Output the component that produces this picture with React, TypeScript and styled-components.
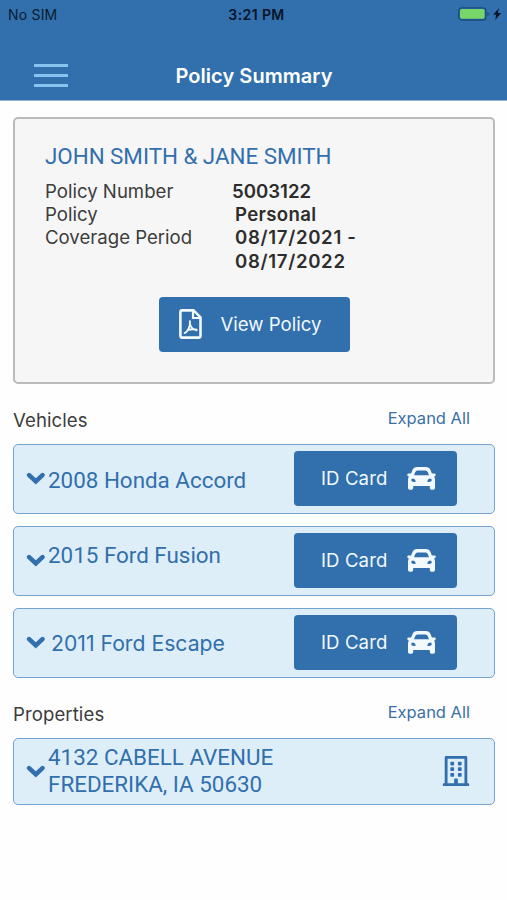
import React from "react";
import styled, { createGlobalStyle } from "styled-components";
import { FaRegBuilding } from "react-icons/fa";

const BLUE = "#316fad";

const GlobalStyle = createGlobalStyle`
  * { box-sizing: border-box; }
  body { margin: 0; background: #fff; font-family: Inter, "Liberation Sans", sans-serif; }
  button { font: inherit; border: 0; padding: 0; cursor: pointer; }
`;

const Screen = styled.main`
  width: 507px;
  height: 900px;
  overflow: hidden;
  background: #fefefe;
`;

const Header = styled.header`
  height: 101px;
  background: ${BLUE};
  border-bottom: 1px solid #8fb3d6;
`;

const StatusBar = styled.div`
  display: grid;
  grid-template-columns: 1fr auto 1fr;
  align-items: center;
  height: 28px;
  padding: 0 5px 0 8px;
  color: #0c1c30;
`;

const Carrier = styled.span`
  font-size: 14px;
  letter-spacing: 0.2px;
`;

const Clock = styled.span`
  margin-left: 3px;
  font-weight: 600;
  font-size: 14px;
  letter-spacing: 0.4px;
  color: #081426;
`;

const BatteryIcon = styled.svg`
  justify-self: end;
  display: block;
  margin-top: -1px;
`;

const NavBar = styled.div`
  display: grid;
  grid-template-columns: 1fr auto 1fr;
  align-items: center;
  height: 72px;
  padding: 23px 33px 0 34px;
`;

const MenuButton = styled.button`
  display: flex;
  flex-direction: column;
  gap: 7px;
  width: 34px;
  background: none;
`;

const MenuLine = styled.span`
  height: 3px;
  background: #86c3ee;
`;

const Title = styled.h1`
  margin: 0;
  font-size: 20px;
  line-height: 24px;
  font-weight: 600;
  letter-spacing: 0.05px;
  color: #fff;
`;

const Content = styled.div`
  padding: 16px 12px 0 13px;
`;

const PolicyCard = styled.section`
  height: 267px;
  padding: 24px 30px 0;
  border: 2px solid #b9bbbc;
  border-radius: 5px;
  background: #f6f6f6;
`;

const Holder = styled.h2`
  margin: 0;
  font: 400 22.4px/26px Roboto, sans-serif;
  letter-spacing: -0.03px;
  color: ${BLUE};
`;

const Details = styled.dl`
  display: grid;
  grid-template-columns: 187px 1fr;
  margin: 10.500px 0 0;
  font-size: 18.6px;
  line-height: 23.4px;
  color: #3c3c3c;
`;

const Term = styled.dt`
  letter-spacing: 0;
`;

const Value = styled.dd<{ $indent?: number; $spacing?: number }>`
  margin: 0;
  padding-left: ${(p) => p.$indent ?? 0}px;
  font-weight: 600;
  letter-spacing: ${(p) => p.$spacing ?? 0}px;
  color: #2d2d2d;
`;

const ActionButton = styled.button<{ $width: number; $gap: number; $left: number }>`
  display: flex;
  align-items: center;
  gap: ${(p) => p.$gap}px;
  flex: none;
  width: ${(p) => p.$width}px;
  height: 55px;
  padding-left: ${(p) => p.$left}px;
  border-radius: 4px;
  background: ${BLUE};
  color: #f2f9ff;
  font-size: 18.6px;
  white-space: nowrap;
`;

const IdCardButton = styled(ActionButton)`
  padding-bottom: 1px;
  letter-spacing: 0.1px;
`;

const PdfIcon = () => (
  <svg width="23" height="30" viewBox="0 0 23 30" fill="none" stroke="currentColor">
    <path d="M3.200 1.400H14.600L21.500 8.300V26.800Q21.500 28.600 19.700 28.600H3.200Q1.400 28.600 1.400 26.800V3.200Q1.400 1.400 3.200 1.400Z" strokeWidth="2.600" strokeLinejoin="round" />
    <path d="M14 2V9H21" strokeWidth="2.200" />
    <path d="M10.900 12.200C11.300 15 10.900 17 9.700 19.400C8.500 21.800 7.200 23.600 5.600 24.100M11.100 15.500C12 18.800 14.300 20.700 17.800 21.200M8.600 21.200C11.400 20.200 14 19.800 17.300 20.500" strokeWidth="1.900" strokeLinecap="round" />
  </svg>
);

const CarIcon = () => (
  <svg width="29" height="23" viewBox="0 0 29 23" fill="currentColor">
    <path
      fillRule="evenodd"
      d="M10.300 0H18.700Q22.300 0 23.600 3.200L24.900 6.600H27.700Q29 6.800 28.700 8L28.400 8.800Q28.200 9.500 27.400 9.500H26.900Q28 10.700 28 12.600V21Q28 22.800 26.200 22.800H24.600Q22.800 22.800 22.800 21V19H6.200V21Q6.200 22.800 4.400 22.800H2.800Q1 22.800 1 21V12.600Q1 10.700 2.100 9.500H1.600Q.8 9.500.6 8.800L.3 8Q0 6.800 1.300 6.600H4.100L5.400 3.200Q6.700 0 10.300 0ZM10.500 3.500Q8.900 3.500 8.300 5L7 8.300H22L20.700 5Q20.100 3.500 18.500 3.500ZM6 11.500Q4.200 11.500 4.200 13.100Q4.200 14.800 6 14.800Q8.800 15.300 8.800 14.300Q8 11.600 6 11.500ZM23 11.500Q21 11.600 20.200 14.300Q20.200 15.300 23 14.800Q24.800 14.800 24.800 13.100Q24.800 11.500 23 11.500Z"
    />
  </svg>
);

const CardAction = styled.div`
  display: flex;
  justify-content: center;
  margin: 23.500px 0 0;
`;

const SectionHead = styled.div`
  display: flex;
  justify-content: space-between;
  align-items: center;
  height: 24px;
  margin-top: 24px;
  padding-right: 25px;
`;

const SectionTitle = styled.h3`
  margin: 0;
  font-weight: 400;
  font-size: 18.6px;
  letter-spacing: 0.08px;
  color: #3c3c3c;
`;

const ExpandLink = styled.button`
  background: none;
  font-size: 16.5px;
  line-height: 20px;
  margin-top: -4px;
  color: #3a70a8;
`;

const List = styled.div`
  display: flex;
  flex-direction: column;
  gap: 12px;
  margin-top: 12px;
`;

const Row = styled.article<{ $height?: number; $right?: number }>`
  display: flex;
  align-items: center;
  height: ${(p) => p.$height ?? 70}px;
  padding: 0 ${(p) => p.$right ?? 37}px 1px 12px;
  border: 1px solid #72a3d1;
  border-radius: 5px;
  background: #deeef9;
  color: ${BLUE};
`;

const ChevronSvg = styled.svg`
  flex: none;
  width: 19px;
  height: 13px;
`;

const Chevron = () => (
  <ChevronSvg viewBox="0 0 19 13">
    <path d="M3.100 3.100L9.800 9.500L16.500 3.100" fill="none" stroke="currentColor" strokeWidth="4.500" strokeLinecap="round" strokeLinejoin="miter" />
  </ChevronSvg>
);

const ItemName = styled.span<{ $native?: boolean; $shift: number }>`
  flex: 1;
  margin-left: ${(p) => (p.$native ? 6 : 3)}px;
  margin-top: ${(p) => p.$shift}px;
  font-family: ${(p) => (p.$native ? "Inter" : "Roboto")}, sans-serif;
  font-size: ${(p) => (p.$native ? 21.2 : 22.4)}px;
  line-height: 27px;
  white-space: pre-line;
`;

const vehicles = [
  { name: "2008 Honda Accord", text: 3 },
  { name: "2015 Ford Fusion", text: -10 },
  { name: "2011 Ford Escape", text: 1, native: true },
];

export default function App() {
  return (
    <Screen>
      <GlobalStyle />
      <Header>
        <StatusBar>
          <Carrier>No SIM</Carrier>
          <Clock>3:21 PM</Clock>
          <BatteryIcon width="44" height="14" viewBox="0 0 44 14">
            <rect x="0.8" y="0.8" width="27" height="12.2" rx="3" fill="none" stroke="#1b4b7c" strokeWidth="1.3" />
            <rect x="2" y="2" width="24.6" height="9.8" rx="1.8" fill="#78d568" />
            <path d="M29.3 5v4c1-.4 1.4-1.1 1.4-2s-.4-1.600-1.400-2z" fill="#1b4b7c" />
            <path d="M40.900 1.200l-5.700 6.600h3l-1 5.200 5.900-6.900h-3.200z" fill="#0a1424" />
          </BatteryIcon>
        </StatusBar>
        <NavBar>
          <MenuButton aria-label="Menu">
            <MenuLine />
            <MenuLine />
            <MenuLine />
          </MenuButton>
          <Title>Policy Summary</Title>
        </NavBar>
      </Header>
      <Content>
        <PolicyCard>
          <Holder>JOHN SMITH &amp; JANE SMITH</Holder>
          <Details>
            <Term>Policy Number</Term>
            <Value>5003122</Value>
            <Term>Policy</Term>
            <Value $indent={3} $spacing={0.35}>Personal</Value>
            <Term>Coverage Period</Term>
            <Value $indent={3} $spacing={0.68}>
              08/17/2021 -<br />
              08/17/2022
            </Value>
          </Details>
          <CardAction>
            <ActionButton $width={191} $gap={19} $left={20}>
              <PdfIcon />
              View Policy
            </ActionButton>
          </CardAction>
        </PolicyCard>
        <SectionHead>
          <SectionTitle>Vehicles</SectionTitle>
          <ExpandLink>Expand All</ExpandLink>
        </SectionHead>
        <List>
          {vehicles.map((v) => (
            <Row key={v.name}>
              <Chevron />
              <ItemName $native={v.native} $shift={v.text}>{v.name}</ItemName>
              <IdCardButton $width={163} $gap={20} $left={27}>
                ID Card
                <CarIcon />
              </IdCardButton>
            </Row>
          ))}
        </List>
        <SectionHead>
          <SectionTitle>Properties</SectionTitle>
          <ExpandLink>Expand All</ExpandLink>
        </SectionHead>
        <List>
          <Row $height={67} $right={23}>
            <Chevron />
            <ItemName $shift={0}>{"4132 CABELL AVENUE\nFREDERIKA, IA 50630"}</ItemName>
            <FaRegBuilding size={30} />
          </Row>
        </List>
      </Content>
    </Screen>
  );
}
